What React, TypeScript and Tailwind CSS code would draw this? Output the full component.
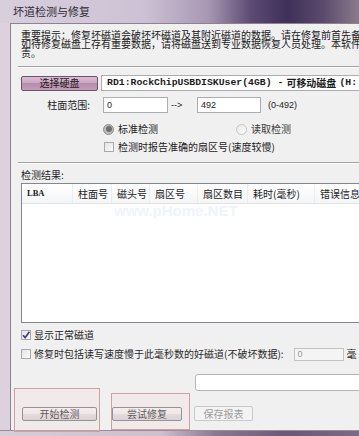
import React from "react";

const cjk = "font-['Noto_Sans_CJK_SC','Liberation_Sans',sans-serif]";

function WinButton({
  label,
  className = "",
  disabled = false,
  tone = "gray",
}: {
  label: string;
  className?: string;
  disabled?: boolean;
  tone?: "gray" | "mauve";
}) {
  const look = disabled
    ? "border-[#c9c9c9] text-[#9c9c9c] bg-[#f3f3f3]"
    : tone === "mauve"
    ? "border-[#6e5468] text-[#1d1d1d] bg-[linear-gradient(#d9bcd2,#c9a4c0_50%,#b68daa_50%,#c39bb7)]"
    : "border-[#707070] text-[#1b1b1b] bg-[linear-gradient(#f4f4f4,#ebebeb_50%,#dcdcdc_50%,#d0d0d0)]";
  return (
    <div
      className={`flex items-center justify-center rounded-[2px] border text-[10px] leading-none ${look} ${className}`}
    >
      {label}
    </div>
  );
}

function CheckBox({ checked = false }: { checked?: boolean }) {
  return (
    <div className="relative w-[10px] h-[10px] shrink-0 border border-[#a9a9a9] bg-[linear-gradient(135deg,#e4e4e4,#fafafa)]">
      {checked && (
        <svg
          viewBox="0 0 10 10"
          className="absolute -left-px -top-px w-[10px] h-[10px]"
        >
          <path
            d="M2 5.2 L4.2 7.6 L8.4 1.8"
            fill="none"
            stroke="#4b3a86"
            strokeWidth="1.7"
          />
        </svg>
      )}
    </div>
  );
}

function Radio({ checked = false }: { checked?: boolean }) {
  return (
    <div
      className={`w-[11px] h-[11px] shrink-0 rounded-full border flex items-center justify-center ${
        checked
          ? "border-[#8c8c8c] bg-[#bcbcbc]"
          : "border-[#c4c4c4] bg-[linear-gradient(135deg,#e6e6e6,#ffffff)]"
      }`}
    >
      {checked && <div className="w-[6px] h-[6px] rounded-full bg-[#6f6f6f]" />}
    </div>
  );
}

function Separator() {
  return <div className="-ml-[3px] h-[2px] border-t border-[#a3a3a3] border-b border-b-white" />;
}

const columns = [
  { name: "LBA", w: "w-[51px]", mono: true },
  { name: "柱面号", w: "w-[39px]" },
  { name: "磁头号", w: "w-[38px]" },
  { name: "扇区号", w: "w-[48px]" },
  { name: "扇区数目", w: "w-[50px]" },
  { name: "耗时(毫秒)", w: "w-[67px]" },
  { name: "错误信息", w: "w-[90px]" },
];

export default function App() {
  return (
    <div className={`w-[359px] h-[436px] overflow-hidden flex flex-col bg-[#dacfd9] text-[#1c1c1c] ${cjk}`}>
      {/* title bar */}
      <div className="relative h-[23px] shrink-0 flex items-center pl-[13px] bg-[linear-gradient(90deg,#d8cfdd_0%,#cdc2d5_40%,#a897b3_58%,#5c4a72_70%,#3f3059_80%,#5b4a6c_90%,#8a7b8c_100%)]">
        <span className="text-[11px] leading-none text-[#2f2a33]">坏道检测与修复</span>
      </div>

      <div className="flex flex-1 min-h-0">
        <div className="w-[10px] shrink-0 bg-[#dcd1dc]" />
        <div className="relative w-[420px] shrink-0 flex flex-col border-l border-t border-[#8f818d] bg-[#f0f0f0] pl-[10px]">
          {/* notice */}
          <div className="mt-[6px] text-[10px] leading-[9px] whitespace-nowrap text-[#202020]">
            <p>重要提示：修复坏磁道会破坏坏磁道及其附近磁道的数据。请在修复前首先备份</p>
            <p>如待修复磁盘上存有重要数据，请将磁盘送到专业数据恢复人员处理。本软件</p>
            <p>责。</p>
          </div>

          <div className="mt-[9px]">
            <Separator />
          </div>

          {/* disk select */}
          <div className="mt-[7px] h-[16px] flex items-center">
            <WinButton label="选择硬盘" tone="mauve" className="w-[77px] h-[15px]" />
            <div className="ml-[3px] h-[16px] flex-1 flex items-center bg-white border border-[#abadb3] pl-[5px] whitespace-nowrap font-bold">
              <span className="font-['Liberation_Mono',monospace] text-[9.8px] leading-none">
                RD1:RockChipUSBDISKUser(4GB) -{" "}
              </span>
              <span className="ml-[3px] text-[10px] leading-none">可移动磁盘</span>
              <span className="ml-[3px] font-['Liberation_Mono',monospace] text-[9.8px] leading-none">(H:</span>
            </div>
          </div>

          {/* range */}
          <div className="mt-[6px] h-[16px] flex items-center text-[10px] leading-none">
            <div className="w-[82px] text-right pr-[13px]">柱面范围:</div>
            <div className="w-[65px] h-[16px] bg-white border border-[#abadb3] pl-[3px] flex items-center font-['Liberation_Sans',sans-serif] text-[9px]">
              0
            </div>
            <div className="w-[29px] pl-[3px] font-['Liberation_Sans',sans-serif] text-[9px]">--&gt;</div>
            <div className="w-[64px] h-[16px] bg-white border border-[#abadb3] pl-[3px] flex items-center font-['Liberation_Sans',sans-serif] text-[9px]">
              492
            </div>
            <div className="ml-[7px] font-['Liberation_Sans',sans-serif] text-[9px]">(0-492)</div>
          </div>

          {/* mode */}
          <div className="mt-[8px] h-[16px] flex items-center text-[10px] leading-none">
            <div className="w-[82px]" />
            <Radio checked />
            <span className="ml-[4px] w-[118px]">标准检测</span>
            <Radio />
            <span className="ml-[4px] text-[#3a3a3a]">读取检测</span>
          </div>

          <div className="mt-[2px] h-[16px] flex items-center text-[10px] leading-none">
            <div className="w-[83px]" />
            <CheckBox />
            <span className="ml-[4px]">检测时报告准确的扇区号(速度较慢)</span>
          </div>

          <div className="mt-[7px]">
            <Separator />
          </div>

          <div className="mt-[4px] h-[14px] flex items-center text-[10px] leading-none">检测结果:</div>

          {/* result list */}
          <div className="relative mt-[1px] h-[140px] border border-[#828790] bg-white">
            <div className="h-[20px] flex items-center border-b border-[#e2e2e2] bg-[linear-gradient(#ffffff,#f4f5f7)] text-[10px] leading-none whitespace-nowrap">
              {columns.map((c) => (
                <div
                  key={c.name}
                  className={`${c.w} h-full flex items-center pl-[5px] border-r border-[#ececec] ${
                    c.mono ? "font-['Liberation_Serif',serif] text-[8.5px] font-bold" : ""
                  }`}
                >
                  {c.name}
                </div>
              ))}
            </div>
            <span className="absolute left-[92px] top-[19px] font-['Liberation_Sans',sans-serif] font-bold text-[15px] leading-none text-[#eef4fb]">
              www.pHome.NET
            </span>
          </div>

          <div className="mt-[5px] h-[14px] flex items-center text-[10px] leading-none">
            <CheckBox checked />
            <span className="ml-[3px]">显示正常磁道</span>
          </div>

          <div className="mt-[4px] h-[16px] flex items-center text-[10px] leading-none whitespace-nowrap">
            <CheckBox />
            <span className="ml-[3px] text-[#2a2a2a]">修复时包括读写速度慢于此毫秒数的好磁道(不破坏数据):</span>
            <div className="ml-[10px] w-[50px] h-[13px] border border-[#c3c3c3] bg-[#f4f4f4] pl-[3px] flex items-center font-['Liberation_Sans',sans-serif] text-[9px] text-[#9a9a9a]">
              0
            </div>
            <span className="ml-[3px]">毫</span>
          </div>

          {/* progress */}
          <div className="mt-[12px] ml-[174px] h-[17px] rounded-[3px] border border-[#b4b4b4] bg-white" />

          {/* actions */}
          <div className="mt-[15px] flex items-center">
            <WinButton label="开始检测" className="ml-[1px] w-[75px] h-[14px]" />
            <WinButton label="尝试修复" className="ml-[15px] w-[70px] h-[14px]" />
            <WinButton label="保存报表" disabled className="ml-[12px] w-[59px] h-[15px]" />
          </div>

          {/* annotation boxes */}
          <div className="absolute left-[3px] top-[364px] w-[86px] h-[44px] border border-[#d49ca3] bg-[#f6dde2]/30 pointer-events-none" />
          <div className="absolute left-[100px] top-[369px] w-[79px] h-[37px] border border-[#d49ca3] bg-[#f6dde2]/30 pointer-events-none" />
        </div>
      </div>

      <div className="h-[6px] shrink-0 border-t border-[#9a8c98] bg-[linear-gradient(90deg,#d9cdd8_0%,#cdbfcc_45%,#8a7890_60%,#6b5878_80%,#7a6a84_100%)]" />
    </div>
  );
}
